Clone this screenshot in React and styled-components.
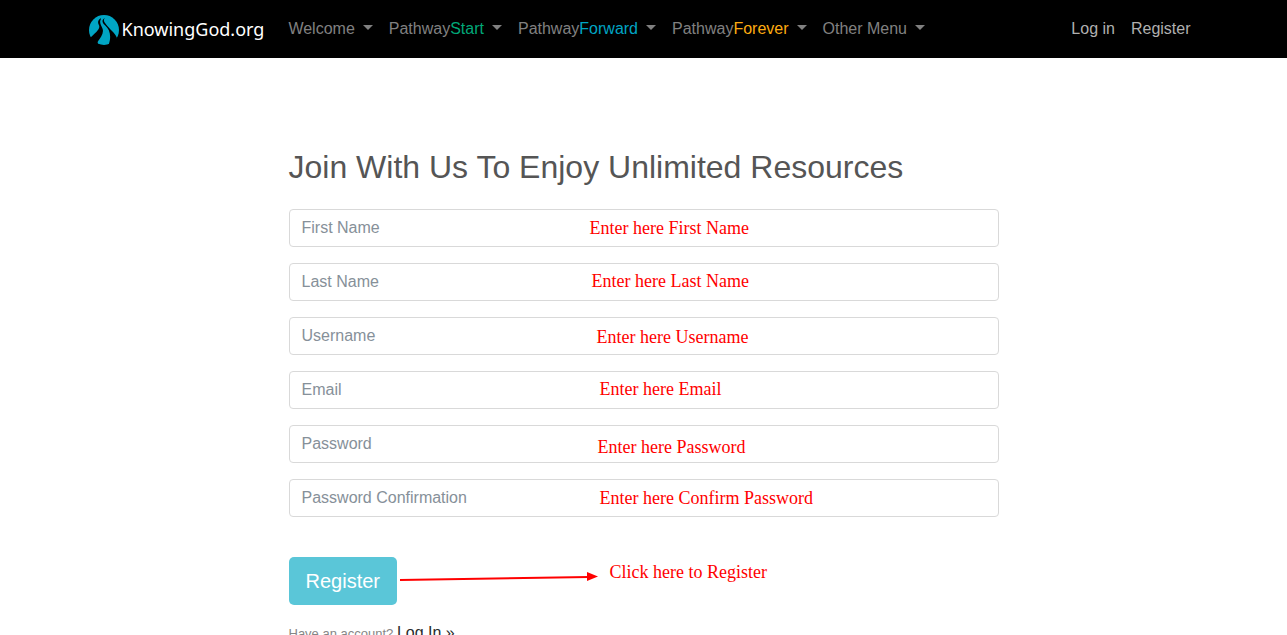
import React from "react";
import styled, { createGlobalStyle } from "styled-components";

const GlobalStyle = createGlobalStyle`
  *, *::before, *::after { box-sizing: border-box; }
  html { scrollbar-width: none; }
  body {
    margin: 0;
    background: #fff;
    color: #292b2c;
    font: 16px/24px "Liberation Sans", Arial, sans-serif;
  }
`;

const Header = styled.header`
  background: #000;
`;

const NavBar = styled.nav`
  display: flex;
  align-items: center;
  max-width: 1140px;
  min-height: 58px;
  margin: 0 auto;
  padding: 0 15px;
`;

const Brand = styled.a`
  display: flex;
  align-items: center;
  gap: 3px;
  margin-right: 16px;
  padding-top: 2px;
  color: #fff;
  font: 18px/28px "Noto Sans", "Open Sans", sans-serif;
  text-decoration: none;
  white-space: nowrap;
`;

const BrandName = styled.span`
  padding-bottom: 2px;
`;

const NavList = styled.ul`
  display: flex;
  flex: ${(p) => (p.$grow ? "1" : "none")};
  margin: 0;
  padding: 0;
  list-style: none;
`;

const NavLink = styled.a`
  display: flex;
  align-items: center;
  gap: 8px;
  padding: 8px;
  color: ${(p) => (p.$bright ? "#b0b0b0" : "#808080")};
  text-decoration: none;
  white-space: nowrap;
`;

const Accent = styled.span`
  color: ${(p) => p.$color};
`;

const Caret = styled.span`
  margin-bottom: 3px;
  border: 5px solid transparent;
  border-top-color: currentColor;
  border-bottom: 0;
`;

const Main = styled.main`
  max-width: 740px;
  margin: 0 auto;
  padding: 89px 15px 40px;
`;

const Title = styled.h1`
  margin: 0 0 22px;
  color: #555;
  font-size: 32px;
  font-weight: 400;
  line-height: 40px;
`;

const FormArea = styled.div`
  position: relative;
`;

const Form = styled.form`
  display: flex;
  flex-direction: column;
  gap: 16px;
`;

const Field = styled.input`
  width: 100%;
  height: 38px;
  padding: 6px 12px;
  border: 1px solid #d9d9d9;
  border-radius: 4px;
  background: #fff;
  color: #464a4c;
  font: inherit;

  &::placeholder {
    color: #869099;
    opacity: 1;
  }
`;

const SubmitButton = styled.button`
  align-self: flex-start;
  height: 48px;
  margin-top: 24px;
  padding: 0 17px;
  border: 0;
  border-radius: 5px;
  background: #5ac6d8;
  color: #fff;
  font: 20px/30px "Liberation Sans", Arial, sans-serif;
`;

const Note = styled.span`
  position: absolute;
  left: ${(p) => p.$x}px;
  top: ${(p) => p.$y}px;
  color: #f00;
  font: 18px/20px "Liberation Serif", "Times New Roman", serif;
  white-space: nowrap;
  pointer-events: none;
`;

const Arrow = styled.svg`
  position: absolute;
  left: 110px;
  top: 360px;
  pointer-events: none;
`;

const AccountLine = styled.p`
  margin: 16px 0 0;
`;

const Hint = styled.span`
  color: #868686;
  font-size: 13px;
`;

const LoginLink = styled.a`
  color: #292b2c;
  text-decoration: none;
`;

const menus = [
  { label: "Welcome" },
  { label: "Pathway", accent: "Start", color: "#00a878" },
  { label: "Pathway", accent: "Forward", color: "#00a5c4" },
  { label: "Pathway", accent: "Forever", color: "#fdab10" },
  { label: "Other Menu" },
];

const fields = [
  { label: "First Name", type: "text" },
  { label: "Last Name", type: "text" },
  { label: "Username", type: "text" },
  { label: "Email", type: "email" },
  { label: "Password", type: "password" },
  { label: "Password Confirmation", type: "password" },
];

const notes = [
  { text: "Enter here First Name", x: 301, y: 9 },
  { text: "Enter here Last Name", x: 303, y: 62 },
  { text: "Enter here Username", x: 308, y: 118 },
  { text: "Enter here Email", x: 311, y: 170 },
  { text: "Enter here Password", x: 309, y: 228 },
  { text: "Enter here Confirm Password", x: 311, y: 279 },
  { text: "Click here to Register", x: 321, y: 353 },
];

function Logo() {
  return (
    <svg width="30" height="30" viewBox="0 0 90 90" aria-hidden="true">
      <circle cx="45" cy="45" r="45" fill="#00a5c4" />
      <path
        d="M35 10 C25 17 26 24 30 31 C35 42 18 54 4 68 C10 82 20 90 30 92 C26 86 25 84 27 79 C34 68 45 56 41 42 C38 32 29 24 36 11 Z"
        fill="#000"
      />
      <path
        d="M46 10 C38 16 39 22 48 31 C64 45 68 66 58 92 L68 90 C76 84 81 78 84 69 C78 52 61 42 52 29 C44 20 43 15 47 10 Z"
        fill="#000"
      />
    </svg>
  );
}

export default function App() {
  return (
    <>
      <GlobalStyle />
      <Header>
        <NavBar>
          <Brand href="#">
            <Logo />
            <BrandName>KnowingGod.org</BrandName>
          </Brand>
          <NavList $grow>
            {menus.map((m) => (
              <li key={m.label + (m.accent || "")}>
                <NavLink href="#">
                  <span>
                    {m.label}
                    {m.accent && <Accent $color={m.color}>{m.accent}</Accent>}
                  </span>
                  <Caret />
                </NavLink>
              </li>
            ))}
          </NavList>
          <NavList>
            <li><NavLink href="#" $bright>Log in</NavLink></li>
            <li><NavLink href="#" $bright>Register</NavLink></li>
          </NavList>
        </NavBar>
      </Header>
      <Main>
        <Title>Join With Us To Enjoy Unlimited Resources</Title>
        <FormArea>
          <Form onSubmit={(e) => e.preventDefault()}>
            {fields.map((f) => (
              <Field key={f.label} type={f.type} placeholder={f.label} aria-label={f.label} />
            ))}
            <SubmitButton type="submit">Register</SubmitButton>
          </Form>
          {notes.map((n) => (
            <Note key={n.text} $x={n.x} $y={n.y}>{n.text}</Note>
          ))}
          <Arrow width="200" height="16" aria-hidden="true">
            <path d="M1 11 L190 8" stroke="#f00" strokeWidth="2" />
            <path d="M188 3 L199 7.500 L188 12 Z" fill="#f00" />
          </Arrow>
        </FormArea>
        <AccountLine>
          <Hint>Have an account? </Hint>
          <LoginLink href="#">Log In »</LoginLink>
        </AccountLine>
      </Main>
    </>
  );
}
